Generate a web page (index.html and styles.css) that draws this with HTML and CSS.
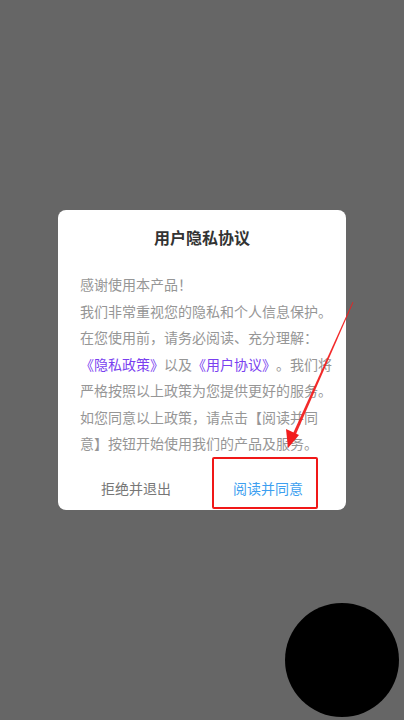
FILE: index.html
```html
<!DOCTYPE html>
<html lang="zh-CN">
<head>
<meta charset="utf-8">
<link rel="stylesheet" href="styles.css">
</head>
<body>
<div class="screen">
  <div class="dialog">
    <div class="title">用户隐私协议</div>
    <div class="content">
      <p>感谢使用本产品！</p>
      <p>我们非常重视您的隐私和个人信息保护。在您使用前，请务必阅读、充分理解：<span class="link">《隐私政策》</span>以及<span class="link">《用户协议》</span>。我们将严格按照以上政策为您提供更好的服务。如您同意以上政策，请点击【阅读并同意】按钮开始使用我们的产品及服务。</p>
    </div>
    <div class="actions">
      <div class="btn reject">拒绝并退出</div>
      <div class="btn agree">阅读并同意</div>
    </div>
    <div class="highlight"></div>
  </div>
  <svg class="arrow" width="404" height="720" viewBox="0 0 404 720">
    <polygon points="352.6,302 353.4,302.3 295.2,436 292.4,434.8" fill="#f21d1d" opacity="0.95"/>
    <polygon points="288,448 286,429 299,435" fill="#f21d1d"/>
  </svg>
  <div class="circle"></div>
</div>
</body>
</html>
```
FILE: styles.css
```css
html, body {
  margin: 0;
  padding: 0;
}
body {
  font-family: "Noto Sans CJK SC", "Noto Sans", sans-serif;
}
.screen {
  position: relative;
  width: 404px;
  height: 720px;
  background: #666666;
  display: flex;
  align-items: center;
  justify-content: center;
  overflow: hidden;
}
.dialog {
  position: relative;
  width: 288px;
  background: #ffffff;
  border-radius: 8px;
}
.title {
  padding-top: 16px;
  font-size: 16px;
  line-height: 22px;
  font-weight: bold;
  color: #333333;
  text-align: center;
}
.content {
  margin-top: 23px;
  padding: 0 12px 0 22px;
  font-size: 14px;
  line-height: 26.5px;
  color: #969696;
  text-spacing-trim: space-all;
}
.content p {
  margin: 0;
}
.link {
  color: #7a3ff0;
}
.actions {
  display: grid;
  grid-template-columns: 1fr 1fr;
  padding: 9px 12px 0 12px;
  height: 44px;
}
.btn {
  display: flex;
  align-items: center;
  justify-content: center;
  font-size: 14px;
}
.reject {
  color: #777777;
}
.agree {
  color: #3d9ff0;
}
.highlight {
  position: absolute;
  left: 154px;
  top: 247px;
  width: 102px;
  height: 48px;
  border: 2px solid #f01818;
  border-radius: 2px;
}
.arrow {
  position: absolute;
  left: 0;
  top: 0;
}
.circle {
  position: absolute;
  left: 285px;
  top: 603px;
  width: 114px;
  height: 114px;
  border-radius: 50%;
  background: #000000;
}
```
